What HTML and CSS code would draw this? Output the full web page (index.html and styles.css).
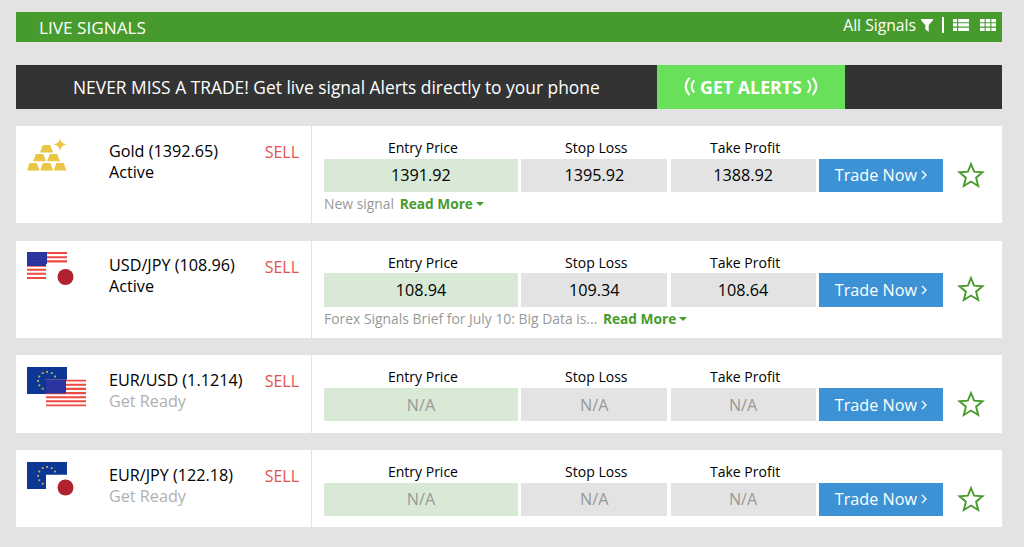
FILE: index.html
```html
<!DOCTYPE html>
<html lang="en">
<head>
  <meta charset="utf-8">
  <title>Live Signals</title>
  <link rel="stylesheet" href="styles.css">
</head>
<body>
  <!-- shared icons -->
  <svg class="sprite" xmlns="http://www.w3.org/2000/svg">
    <symbol id="us" viewBox="0 0 40 27">
      <rect width="40" height="27" fill="#fff"/>
      <path d="M0 1H40M0 5.2H40M0 9.4H40M0 13.6H40M0 17.7H40M0 21.8H40M0 26H40" stroke="#ee4a42" stroke-width="2.1"/>
      <rect width="20" height="14" fill="#2a32a0"/>
      <path d="M1.5 2.5H19M2.5 5.5H19M1.5 8.5H19M2.5 11.5H19" stroke="#434bad" stroke-width="1" stroke-dasharray="1 2"/>
    </symbol>
    <symbol id="eu" viewBox="0 0 40 27">
      <rect width="40" height="27" fill="#0c3796"/>
      <g fill="#c9b552">
        <rect x="19.2" y="4" width="1.8" height="1.8"/>
        <rect x="23.8" y="5.2" width="1.8" height="1.8"/>
        <rect x="27.2" y="8.6" width="1.8" height="1.8"/>
        <rect x="28.4" y="13" width="1.8" height="1.8"/>
        <rect x="27.2" y="17.4" width="1.8" height="1.8"/>
        <rect x="23.8" y="20.8" width="1.8" height="1.8"/>
        <rect x="19.2" y="22" width="1.8" height="1.8"/>
        <rect x="14.8" y="20.8" width="1.8" height="1.8"/>
        <rect x="11.4" y="17.4" width="1.8" height="1.8"/>
        <rect x="10.2" y="13" width="1.8" height="1.8"/>
        <rect x="11.4" y="8.6" width="1.8" height="1.8"/>
        <rect x="14.8" y="5.2" width="1.8" height="1.8"/>
      </g>
    </symbol>
    <symbol id="jp" viewBox="0 0 40 27">
      <rect width="40" height="27" fill="#fff"/>
      <circle cx="19.5" cy="13" r="8" fill="#b0222d"/>
    </symbol>
    <symbol id="gold" viewBox="0 0 60 42">
      <g fill="#eac645">
        <path d="M15.8 7H23.2L26 14.5H13ZM8.8 16H16.2L19 23.2H6.2ZM22.8 16H30.2L33 23.2H20ZM2.5 25H9.8L12.8 32.5H0ZM16 25H23.3L26.2 32.5H13.2ZM29.3 25H36.6L39.5 32.5H26.7Z"/>
        <path d="M33 0.300Q33.800 5.800 39.500 6.600Q33.800 7.400 33 13Q32.200 7.400 26.500 6.600Q32.200 5.800 33 0.300Z"/>
      </g>
    </symbol>
    <symbol id="star" viewBox="0 0 28 28">
      <path d="M14 3L17.100 10.700L25.500 11.300L19.100 16.700L21.200 25L14 20.500L6.800 25L8.900 16.700L2.500 11.300L10.900 10.700Z" fill="none" stroke="#479b2d" stroke-width="1.900"/>
    </symbol>
    <symbol id="chevron" viewBox="0 0 6 10">
      <path d="M1 1L5 5L1 9" fill="none" stroke="#fff" stroke-width="1.400"/>
    </symbol>
    <symbol id="waves" viewBox="0 0 12 20">
      <path d="M5.500 1Q-2.500 10 5.500 19M10.500 3.500Q5 10 10.500 16.500" fill="none" stroke="#fff" stroke-width="2.100"/>
    </symbol>
  </svg>

  <div class="header">
    <h1>LIVE SIGNALS</h1>
    <div class="tools">
      <span>All Signals</span>
      <svg class="filter" viewBox="0 0 12 13"><path d="M0 0H12V1.200L7.700 6V13L4.300 10.200V6L0 1.200Z" fill="#fff"/></svg>
      <span class="divider"></span>
      <svg class="list" viewBox="0 0 16 12"><path d="M0 0H4V3.300H0ZM5.200 0H16V3.300H5.200ZM0 4.300H4V7.600H0ZM5.200 4.300H16V7.600H5.200ZM0 8.700H4V12H0ZM5.200 8.700H16V12H5.200Z" fill="#fff"/></svg>
      <svg class="grid" viewBox="0 0 16 12"><path d="M0 0H4.600V3.300H0ZM5.700 0H10.300V3.300H5.700ZM11.400 0H16V3.300H11.400ZM0 4.300H4.600V7.600H0ZM5.700 4.300H10.300V7.600H5.700ZM11.400 4.300H16V7.600H11.400ZM0 8.700H4.600V12H0ZM5.700 8.700H10.300V12H5.700ZM11.400 8.700H16V12H11.400Z" fill="#fff"/></svg>
    </div>
  </div>

  <div class="banner">
    <p>NEVER MISS A TRADE! Get live signal Alerts directly to your phone</p>
    <a class="alerts" href="#">
      <svg><use href="#waves"/></svg>
      <span>GET ALERTS</span>
      <svg class="flip"><use href="#waves"/></svg>
    </a>
  </div>

  <div class="signals">
    <div class="signal tall">
      <div class="pair">
        <svg class="icon"><use href="#gold" width="60" height="42"/></svg>
        <div class="name">Gold (1392.65)<br>Active</div>
        <div class="side">SELL</div>
      </div>
      <div class="details">
        <div class="prices">
          <div class="label">Entry Price</div>
          <div class="label">Stop Loss</div>
          <div class="label">Take Profit</div>
          <div class="value entry">1391.92</div>
          <div class="value">1395.92</div>
          <div class="value">1388.92</div>
          <a class="trade" href="#">Trade Now <svg><use href="#chevron"/></svg></a>
          <svg class="star"><use href="#star"/></svg>
        </div>
        <div class="note">New signal <a class="more" href="#">Read More</a></div>
      </div>
    </div>

    <div class="signal tall">
      <div class="pair">
        <svg class="icon"><use href="#us" width="40" height="27"/><use href="#jp" x="19" y="12" width="40" height="27"/></svg>
        <div class="name">USD/JPY (108.96)<br>Active</div>
        <div class="side">SELL</div>
      </div>
      <div class="details">
        <div class="prices">
          <div class="label">Entry Price</div>
          <div class="label">Stop Loss</div>
          <div class="label">Take Profit</div>
          <div class="value entry">108.94</div>
          <div class="value">109.34</div>
          <div class="value">108.64</div>
          <a class="trade" href="#">Trade Now <svg><use href="#chevron"/></svg></a>
          <svg class="star"><use href="#star"/></svg>
        </div>
        <div class="note">Forex Signals Brief for July 10: Big Data is... <a class="more" href="#">Read More</a></div>
      </div>
    </div>

    <div class="signal waiting">
      <div class="pair">
        <svg class="icon"><use href="#eu" width="40" height="27"/><use href="#us" x="19" y="12.500" width="40" height="27"/></svg>
        <div class="name">EUR/USD (1.1214)<br><span>Get Ready</span></div>
        <div class="side">SELL</div>
      </div>
      <div class="details">
        <div class="prices">
          <div class="label">Entry Price</div>
          <div class="label">Stop Loss</div>
          <div class="label">Take Profit</div>
          <div class="value entry">N/A</div>
          <div class="value">N/A</div>
          <div class="value">N/A</div>
          <a class="trade" href="#">Trade Now <svg><use href="#chevron"/></svg></a>
          <svg class="star"><use href="#star"/></svg>
        </div>
      </div>
    </div>

    <div class="signal waiting">
      <div class="pair">
        <svg class="icon"><use href="#eu" width="40" height="27"/><use href="#jp" x="19" y="12.500" width="40" height="27"/></svg>
        <div class="name">EUR/JPY (122.18)<br><span>Get Ready</span></div>
        <div class="side">SELL</div>
      </div>
      <div class="details">
        <div class="prices">
          <div class="label">Entry Price</div>
          <div class="label">Stop Loss</div>
          <div class="label">Take Profit</div>
          <div class="value entry">N/A</div>
          <div class="value">N/A</div>
          <div class="value">N/A</div>
          <a class="trade" href="#">Trade Now <svg><use href="#chevron"/></svg></a>
          <svg class="star"><use href="#star"/></svg>
        </div>
      </div>
    </div>
  </div>
</body>
</html>
```
FILE: styles.css
```css
* {
  box-sizing: border-box;
}

body {
  margin: 0;
  padding: 11.5px 22px 0 16px;
  background-color: #e3e3e3;
  color: #000;
  font-family: "Open Sans", "Noto Sans", sans-serif;
  font-size: 16px;
}

a {
  text-decoration: none;
}

svg {
  display: block;
  flex: none;
}

.sprite {
  position: absolute;
  width: 0;
  height: 0;
}

.header {
  display: flex;
  justify-content: space-between;
  align-items: center;
  height: 30px;
  padding: 0 6px 0 23px;
  background-color: #479b2d;
  color: #fff;
}

.header h1 {
  margin: 0;
  padding-top: 1px;
  font-size: 17.2px;
  font-weight: 400;
}

.tools {
  display: flex;
  align-items: center;
  padding-bottom: 3px;
  font-size: 15.7px;
}

.filter {
  width: 12px;
  height: 13px;
  margin-left: 5px;
}

.divider {
  width: 1.5px;
  height: 16px;
  margin: 0 9.5px 0 9px;
  background-color: #fff;
}

.list,
.grid {
  width: 16px;
  height: 12px;
}

.grid {
  margin-left: 11px;
}

.banner {
  display: flex;
  align-items: center;
  height: 44px;
  margin-top: 23px;
  background-color: #333;
  color: #fff;
}

.banner p {
  width: 641px;
  margin: 0;
  padding-left: 57px;
  font-size: 17.4px;
  white-space: nowrap;
}

.alerts {
  display: flex;
  justify-content: center;
  align-items: center;
  gap: 4px;
  width: 188px;
  height: 44px;
  background-color: #69e05a;
  color: #fff;
  font-size: 17.8px;
  font-weight: 700;
}

.alerts svg {
  width: 12px;
  height: 19px;
}

.alerts .flip {
  transform: scaleX(-1);
}

.signals {
  display: flex;
  flex-direction: column;
  gap: 17.3px;
  margin-top: 17.5px;
}

.signal {
  display: flex;
  height: 77.4px;
  background-color: #fff;
}

.signal.tall {
  height: 97.4px;
}

.pair {
  display: flex;
  width: 296px;
  padding: 11.5px 12px 0 11px;
  border-right: 1px solid #e3e3e3;
}

.icon {
  width: 60px;
  height: 42px;
}

.name {
  flex: 1;
  padding: 3px 0 0 22px;
  font-size: 16.2px;
  line-height: 21px;
  white-space: nowrap;
}

.name span {
  color: #b0b0b0;
}

.side {
  padding-top: 4.5px;
  color: #e05252;
  line-height: 21px;
}

.details {
  padding: 11px 0 0 12px;
}

.prices {
  display: grid;
  grid-template-columns: 194px 146px 145px 124px 40px;
  grid-template-rows: 21.5px 33.5px;
  column-gap: 3.3px;
}

.label {
  padding-left: 4px;
  font-size: 14px;
  line-height: 21px;
  text-align: center;
}

.value,
.trade {
  display: flex;
  justify-content: center;
  align-items: center;
  background-color: #e3e3e3;
  font-size: 16.2px;
}

.value.entry {
  grid-column: 1;
  background-color: #d8ead6;
}

.waiting .value {
  color: #999;
}

.trade {
  grid-column: 4;
  gap: 4px;
  background-color: #3c92d4;
  color: #fff;
}

.trade svg {
  width: 6px;
  height: 10px;
}

.star {
  width: 28px;
  height: 28px;
  margin: 2px 0 0 11px;
}

.note {
  color: #999;
  font-size: 13.9px;
  line-height: 24px;
}

.more {
  display: inline-flex;
  align-items: center;
  gap: 3px;
  margin-left: 2px;
  color: #479b2d;
  font-size: 13.7px;
  font-weight: 700;
}

.more::after {
  content: "";
  border: 4.5px solid transparent;
  border-top-color: #479b2d;
  border-bottom: 0;
}
```
